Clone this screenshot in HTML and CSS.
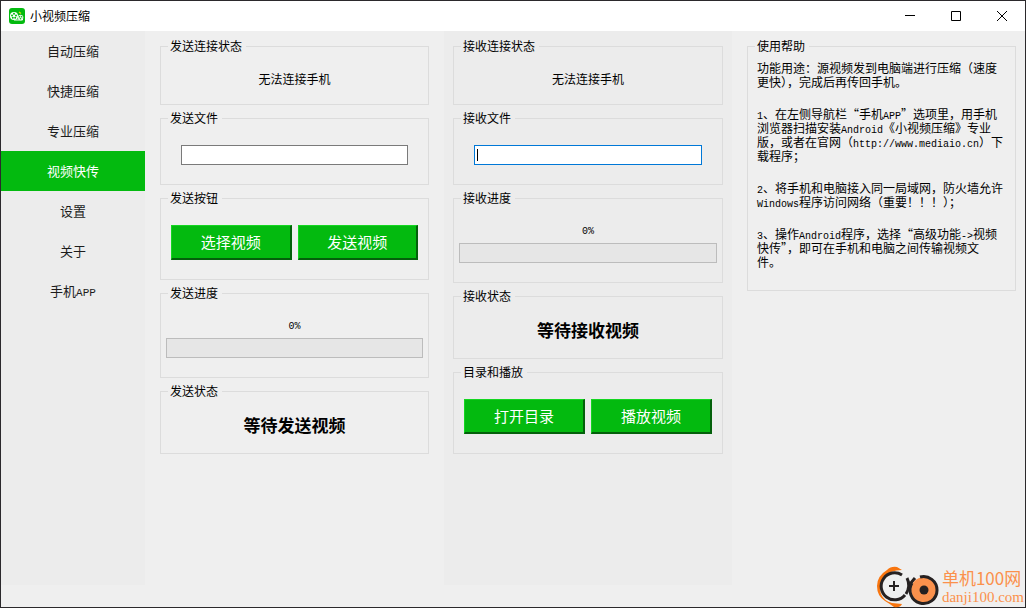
FILE: index.html
```html
<!DOCTYPE html>
<html lang="zh-CN">
<head>
<meta charset="utf-8">
<title>小视频压缩</title>
<link rel="stylesheet" href="styles.css">
</head>
<body>
<div class="window">
  <header class="titlebar">
    <svg class="app-icon" viewBox="0 0 16 16" aria-hidden="true">
      <rect width="16" height="16" rx="3" fill="#03ba0f"/>
      <circle cx="5" cy="8" r="4" fill="#fff"/>
      <circle cx="11.5" cy="9.5" r="2.8" fill="#d9f5db"/>
      <path d="M5 12h8.5v-1" stroke="#fff" fill="none"/>
      <g fill="#03ba0f"><circle cx="5" cy="5.8" r="1"/><circle cx="3" cy="7.4" r="1"/><circle cx="7" cy="7.4" r="1"/><circle cx="3.8" cy="9.8" r="1"/><circle cx="6.2" cy="9.8" r="1"/><circle cx="10.5" cy="8.8" r=".7"/><circle cx="12.6" cy="8.8" r=".7"/><circle cx="11.5" cy="10.8" r=".7"/></g>
      <path d="M10 4l2 1.5" stroke="#d5dc12" stroke-width="1.3"/>
    </svg>
    <h1 class="title">小视频压缩</h1>
    <div class="controls">
      <button class="control" type="button" aria-label="最小化"><svg viewBox="0 0 12 12"><path d="M1 5.500h10"/></svg></button>
      <button class="control" type="button" aria-label="最大化"><svg viewBox="0 0 12 12"><path d="M1.500 1.500h9v9h-9z"/></svg></button>
      <button class="control" type="button" aria-label="关闭"><svg viewBox="0 0 12 12"><path d="M1 1l10 10M11 1L1 11"/></svg></button>
    </div>
  </header>
  <div class="content">
    <nav class="sidebar">
      <button class="nav-item" type="button">自动压缩</button>
      <button class="nav-item" type="button">快捷压缩</button>
      <button class="nav-item" type="button">专业压缩</button>
      <button class="nav-item active" type="button" aria-current="page">视频快传</button>
      <button class="nav-item" type="button">设置</button>
      <button class="nav-item" type="button">关于</button>
      <button class="nav-item" type="button">手机<span class="latin">APP</span></button>
    </nav>
    <section class="column send">
      <fieldset class="group connection"><legend>发送连接状态</legend><p class="message">无法连接手机</p></fieldset>
      <fieldset class="group file"><legend>发送文件</legend><div class="field"><input class="path" type="text" aria-label="发送文件"></div></fieldset>
      <fieldset class="group actions"><legend>发送按钮</legend><div class="buttons"><button class="action" type="button">选择视频</button><button class="action" type="button">发送视频</button></div></fieldset>
      <fieldset class="group transfer"><legend>发送进度</legend><label class="percent" for="send-progress">0%</label><progress class="bar" id="send-progress" value="0" max="100"></progress></fieldset>
      <fieldset class="group status"><legend>发送状态</legend><p class="state">等待发送视频</p></fieldset>
    </section>
    <section class="column receive">
      <fieldset class="group connection"><legend>接收连接状态</legend><p class="message">无法连接手机</p></fieldset>
      <fieldset class="group file"><legend>接收文件</legend><div class="field focused"><input class="path" type="text" aria-label="接收文件"></div></fieldset>
      <fieldset class="group transfer"><legend>接收进度</legend><label class="percent" for="receive-progress">0%</label><progress class="bar" id="receive-progress" value="0" max="100"></progress></fieldset>
      <fieldset class="group status"><legend>接收状态</legend><p class="state">等待接收视频</p></fieldset>
      <fieldset class="group actions"><legend>目录和播放</legend><div class="buttons"><button class="action" type="button">打开目录</button><button class="action" type="button">播放视频</button></div></fieldset>
    </section>
    <section class="column help">
      <fieldset class="group guide"><legend>使用帮助</legend>
        <p>功能用途：源视频发到电脑端进行压缩（速度<br>更快），完成后再传回手机。</p>
        <p><span class="latin">1</span>、在左侧导航栏“手机<span class="latin">APP</span>”选项里，用手机<br>浏览器扫描安装<span class="latin">Android</span>《小视频压缩》专业<br>版，或者在官网（<span class="latin">http://www.mediaio.cn</span>）下<br>载程序；</p>
        <p><span class="latin">2</span>、将手机和电脑接入同一局域网，防火墙允许<br><span class="latin">Windows</span>程序访问网络（重要！！！）；</p>
        <p><span class="latin">3</span>、操作<span class="latin">Android</span>程序，选择“高级功能<span class="latin">-&gt;</span>视频<br>快传”，即可在手机和电脑之间传输视频文<br>件。</p>
      </fieldset>
    </section>
  </div>
  <div class="watermark">
    <svg class="mark" viewBox="0 0 64 42" aria-hidden="true">
      <path d="M11 4Q15 0 21 1L26 4Q14 4 8 11Q2 19 5 28Q8 35 16 37L26 38Q24 42 18 41Q14 38 9 35Q1 30 1 20Q1 10 11 4z" fill="#f8750f"/>
      <path d="M26 9A13.500 13.500 0 1 0 29 29" fill="none" stroke="#262121" stroke-width="3"/>
      <path d="M18 15v10M13 20h10" stroke="#262121" stroke-width="2"/>
      <path d="M31 12Q35 20 30 28M34 18L39 12" fill="none" stroke="#262121" stroke-width="3"/>
      <circle cx="48" cy="24" r="13" fill="#fb914c"/>
      <path d="M44 11A13.500 13.500 0 1 1 36 17" fill="none" stroke="#262121" stroke-width="3"/>
      <circle cx="48" cy="24" r="4.500" fill="#262121"/>
    </svg>
    <div class="brand"><span class="brand-name">单机100网</span><span class="brand-site">danji100.com</span></div>
  </div>
</div>
</body>
</html>
```
FILE: styles.css
```css
* { box-sizing: border-box; }
body {
  margin: 0;
  font: 12px/14px "Noto Sans CJK SC", "Liberation Sans", sans-serif;
  color: #000;
}
button, input { font: inherit; }
p { margin: 0; }
.window {
  position: relative;
  display: flex;
  flex-direction: column;
  min-height: 100vh;
  padding-bottom: 22px;
  border: 1px solid #2b292c;
  background: #efefef;
}
.titlebar {
  display: flex;
  align-items: center;
  height: 30px;
  padding-left: 8px;
  background: #fff;
}
.app-icon { width: 16px; height: 16px; }
.title { margin: 0 0 0 5px; font-size: 12px; font-weight: 400; }
.controls { display: flex; margin-left: auto; }
.control {
  display: grid;
  place-items: center;
  width: 46px;
  height: 28px;
  padding: 0;
  border: 0;
  background: transparent;
}
.control svg { width: 12px; height: 12px; fill: none; stroke: #000; }
.content {
  display: grid;
  flex: 1;
  grid-template-columns: 144px 299fr 288fr 293fr;
}
.sidebar { background: #ececec; }
.nav-item {
  display: block;
  width: 100%;
  height: 40px;
  padding: 0;
  border: 0;
  background: transparent;
  color: #1c1c1c;
  font-size: 13px;
}
.nav-item.active { background: #03ba0f; color: #fff; }
.latin {
  font-family: "Liberation Mono", monospace;
  font-size: 10px;
  line-height: 0;
}
.nav-item .latin { font-size: 11px; }
.column {
  display: flex;
  flex-direction: column;
  gap: 7px;
  min-width: 0;
  padding: 9px 15px;
}
.receive { padding: 9px; background: #ececec; }
.help { padding: 9px 9px 9px 15px; }
.group {
  min-width: 0;
  margin: 0;
  padding: 0 5px;
  border: 1px solid #dcdcdc;
}
.group legend {
  height: 12px;
  margin-left: 2px;
  padding: 0 4px 0 2px;
  line-height: 12px;
}
.message { padding: 20px 0 18px; text-align: center; }
.field { position: relative; padding: 21px 15px 19px; }
.path {
  display: block;
  width: 100%;
  height: 20px;
  padding: 0 3px;
  border: 1px solid #7a7a7a;
  border-radius: 0;
  background: #fff;
}
.focused .path { border-color: #0078d7; }
.focused::after {
  content: "";
  position: absolute;
  top: 25px;
  left: 18px;
  width: 1px;
  height: 12px;
  background: #000;
}
.buttons {
  display: grid;
  grid-template-columns: 1fr 1fr;
  gap: 6px;
  padding: 21px 5px 19px;
}
.action {
  height: 35px;
  padding: 0;
  border: 2px solid;
  border-color: #14d621 #04600b #04600b #14d621;
  border-width: 1px 2px 2px 1px;
  border-radius: 0;
  background: #03ba0f;
  color: #fff;
  font-size: 15px;
}
.percent {
  display: block;
  padding: 21px 0 4px;
  font: 10px/14px "Liberation Mono", monospace;
  text-align: center;
}
.bar {
  display: block;
  width: 100%;
  height: 20px;
  margin-bottom: 19px;
  border: 1px solid #bcbcbc;
  background: #e6e6e6;
  appearance: none;
}
.bar::-webkit-progress-bar { background: #e6e6e6; }
.bar::-webkit-progress-value { background: #03ba0f; }
.state {
  padding: 18px 0;
  font-size: 17px;
  line-height: 20px;
  font-weight: 700;
  text-align: center;
}
.guide { padding: 9px 9px 21px; white-space: nowrap; }
.guide legend { margin-left: -2px; }
.guide p + p { margin-top: 18px; }
.watermark {
  position: absolute;
  right: 1px;
  bottom: -1px;
  display: flex;
  align-items: center;
  gap: 2px;
  color: #fb914c;
}
.mark { width: 64px; height: 42px; }
.brand { display: flex; flex-direction: column; }
.brand-name { font-size: 17px; line-height: 20px; }
.brand-site { font: 15px/18px "Liberation Serif", serif; }
```
